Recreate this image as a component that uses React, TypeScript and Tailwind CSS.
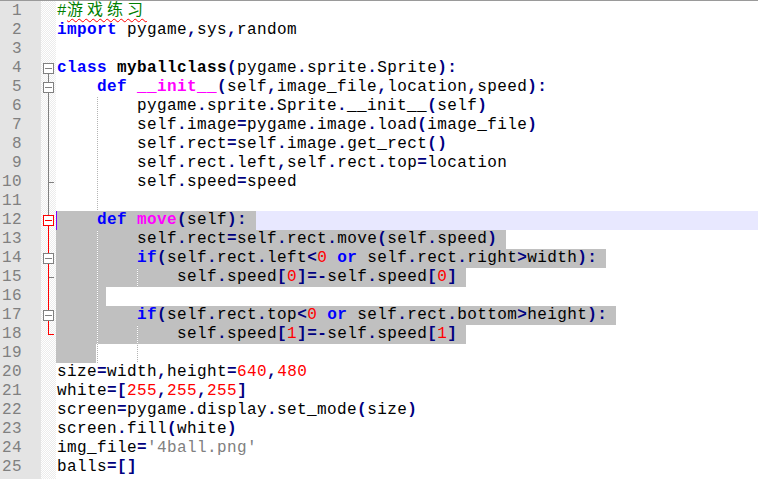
import React from "react";

const LINES: string[] = [
  "#游戏练习",
  "import pygame,sys,random",
  "",
  "class myballclass(pygame.sprite.Sprite):",
  "    def __init__(self,image_file,location,speed):",
  "        pygame.sprite.Sprite.__init__(self)",
  "        self.image=pygame.image.load(image_file)",
  "        self.rect=self.image.get_rect()",
  "        self.rect.left,self.rect.top=location",
  "        self.speed=speed",
  "",
  "    def move(self):",
  "        self.rect=self.rect.move(self.speed)",
  "        if(self.rect.left<0 or self.rect.right>width):",
  "            self.speed[0]=-self.speed[0]",
  "    ",
  "        if(self.rect.top<0 or self.rect.bottom>height):",
  "            self.speed[1]=-self.speed[1]",
  "    ",
  "size=width,height=640,480",
  "white=[255,255,255]",
  "screen=pygame.display.set_mode(size)",
  "screen.fill(white)",
  "img_file='4ball.png'",
  "balls=[]",
];

type Kind = "kw" | "op" | "id" | "sp" | "num" | "str" | "com" | "cls" | "fn";
type Tok = { t: string; k: Kind };

const KW = new Set(["import", "class", "def", "if", "or"]);

const CLS: Record<Kind, string> = {
  kw: "text-[#0000ff] font-bold",
  op: "text-[#000080] font-bold",
  id: "text-black",
  sp: "",
  num: "text-[#ff0000]",
  str: "text-[#808080]",
  com: "text-[#008000]",
  cls: "text-black font-bold",
  fn: "text-[#ff00ff] font-bold",
};

function tokenize(line: string): Tok[] {
  const out: Tok[] = [];
  let i = 0;
  let last = "";
  while (i < line.length) {
    const c = line[i];
    if (c === "#") {
      out.push({ t: line.slice(i), k: "com" });
      break;
    }
    if (c === "'") {
      let j = line.indexOf("'", i + 1);
      if (j < 0) j = line.length - 1;
      out.push({ t: line.slice(i, j + 1), k: "str" });
      i = j + 1;
      continue;
    }
    if (/[0-9]/.test(c)) {
      let j = i;
      while (j < line.length && /[0-9]/.test(line[j])) j++;
      out.push({ t: line.slice(i, j), k: "num" });
      i = j;
      continue;
    }
    if (/[A-Za-z_]/.test(c)) {
      let j = i;
      while (j < line.length && /[A-Za-z0-9_]/.test(line[j])) j++;
      const w = line.slice(i, j);
      let k: Kind = "id";
      if (KW.has(w)) k = "kw";
      else if (last === "class") k = "cls";
      else if (last === "def") k = "fn";
      out.push({ t: w, k });
      last = w;
      i = j;
      continue;
    }
    if (c === " ") {
      let j = i;
      while (j < line.length && line[j] === " ") j++;
      out.push({ t: line.slice(i, j), k: "sp" });
      i = j;
      continue;
    }
    out.push({ t: c, k: "op" });
    last = c;
    i++;
  }
  return out;
}

function renderTokens(line: string) {
  return tokenize(line).map((tk, idx) => {
    if (tk.k === "com") {
      return (
        <React.Fragment key={idx}>
          <span className="text-[#008000]">#</span>
          <span className="text-[#008000] tracking-[4px] underline decoration-wavy decoration-[#ff0000] decoration-1 underline-offset-[3px]">
            {tk.t.slice(1)}
          </span>
        </React.Fragment>
      );
    }
    return (
      <span key={idx} className={CLS[tk.k]}>
        {tk.t}
      </span>
    );
  });
}

type Fold = {
  box?: string;
  top?: string;
  bottom?: string;
  vline?: string;
  tick?: string;
  corner?: string;
};

const G = "#808080";
const R = "#ff0000";

const FOLDS: Record<number, Fold> = {
  4: { box: G, bottom: G },
  5: { box: G, top: G, bottom: G },
  6: { vline: G },
  7: { vline: G },
  8: { vline: G },
  9: { vline: G },
  10: { vline: G, tick: G },
  11: { vline: G },
  12: { box: R, top: G, bottom: R },
  13: { vline: R },
  14: { vline: R, box: G },
  15: { vline: R, tick: G },
  16: { vline: R },
  17: { vline: R, box: G },
  18: { corner: R },
};

function FoldMark({ f }: { f?: Fold }) {
  if (!f) return <div className="h-[19px]" />;
  return (
    <svg width="15" height="19" viewBox="0 0 15 19" shapeRendering="crispEdges" className="block">
      {f.vline && <line x1="7.5" y1="0" x2="7.5" y2="19" stroke={f.vline} strokeWidth="1" />}
      {f.top && <line x1="7.5" y1="0" x2="7.5" y2="5" stroke={f.top} strokeWidth="1" />}
      {f.bottom && <line x1="7.5" y1="14" x2="7.5" y2="19" stroke={f.bottom} strokeWidth="1" />}
      {f.tick && <line x1="7.5" y1="9.5" x2="13" y2="9.5" stroke={f.tick} strokeWidth="1" />}
      {f.corner && (
        <>
          <line x1="7.5" y1="0" x2="7.5" y2="10" stroke={f.corner} strokeWidth="1" />
          <line x1="7.5" y1="9.5" x2="13" y2="9.5" stroke={f.corner} strokeWidth="1" />
        </>
      )}
      {f.box && (
        <>
          <rect x="2.5" y="4.5" width="10" height="10" fill="#ffffff" stroke={f.box} strokeWidth="1" />
          <line x1="4" y1="9.5" x2="11" y2="9.5" stroke={f.box} strokeWidth="1" />
        </>
      )}
    </svg>
  );
}

const EOL_SEL = new Set([12, 13, 14, 15, 16, 17, 18]);

function CodeRow({ n, text }: { n: number; text: string }) {
  const cur = n === 12;
  return (
    <div className={`relative flex h-[19px] leading-[19px] whitespace-pre ${cur ? "bg-[#e8e8ff]" : ""}`}>
      {EOL_SEL.has(n) ? (
        <span className="h-[19px] bg-[#c0c0c0] pl-[1px] pr-[9px]">{renderTokens(text)}</span>
      ) : n === 19 ? (
        <span className="h-[19px] w-[40px] bg-[#c0c0c0]" />
      ) : (
        <span className="pl-[1px]">{renderTokens(text)}</span>
      )}
      {cur && <span className="absolute left-0 top-0 h-[19px] w-[1px] bg-[#8000ff]" />}
    </div>
  );
}

const GUIDE =
  "absolute w-[1px] bg-[repeating-linear-gradient(to_bottom,#b4b4b4_0px,#b4b4b4_1px,#ffffff_1px,#ffffff_2px)]";

export default function App() {
  return (
    <div className="flex h-[479px] w-[758px] overflow-hidden border-t border-[#9a9a9a] bg-white font-['Liberation_Mono','Noto_Sans_CJK_SC',monospace] text-[16px] tracking-[0.4px]">
      <div className="w-[41px] shrink-0 bg-[#e4e4e4] pt-[1px] text-[#808080]">
        {LINES.map((_, i) => (
          <div key={i} className="h-[19px] w-[22px] text-right leading-[19px]">
            {i + 1}
          </div>
        ))}
      </div>
      <div className="w-[15px] shrink-0 bg-[repeating-conic-gradient(#ececec_0%_25%,#ffffff_0%_50%)] bg-[length:2px_2px] pt-[1px]">
        {LINES.map((_, i) => (
          <FoldMark key={i} f={FOLDS[i + 1]} />
        ))}
      </div>
      <div className="relative flex-1 pt-[1px]">
        {LINES.map((l, i) => (
          <CodeRow key={i} n={i + 1} text={l} />
        ))}
        <span className={`${GUIDE} left-[41px] top-[96px] h-[114px]`} />
        <span className={`${GUIDE} left-[41px] top-[229px] h-[133px]`} />
        <span className={`${GUIDE} left-[81px] top-[267px] h-[19px]`} />
        <span className={`${GUIDE} left-[81px] top-[324px] h-[38px]`} />
      </div>
    </div>
  );
}
